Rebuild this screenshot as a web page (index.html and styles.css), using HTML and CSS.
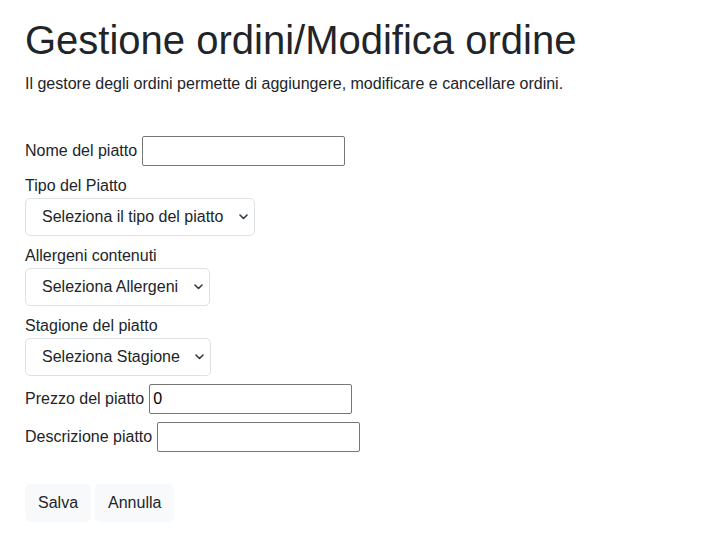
FILE: index.html
```html
<!DOCTYPE html>
<html lang="it">
<head>
<meta charset="utf-8">
<title>Gestione ordini</title>
<link rel="stylesheet" href="styles.css">
</head>
<body>
<main class="page">
  <h1 class="title">Gestione ordini/Modifica ordine</h1>
  <p class="lead">Il gestore degli ordini permette di aggiungere, modificare e cancellare ordini.</p>

  <form class="form">
    <div class="row inline">
      <label for="nome">Nome del piatto</label>
      <input id="nome" class="text-input" type="text">
    </div>

    <div class="group">
      <label for="tipo" class="block-label">Tipo del Piatto</label>
      <div class="select-wrap w-tipo">
        <select id="tipo" class="select"><option>Seleziona il tipo del piatto</option></select>
        <svg class="chev" width="9" height="6" viewBox="0 0 9 6"><path d="M1 1l3.5 3.5L8 1" fill="none" stroke="#343a40" stroke-width="1.6" stroke-linecap="round" stroke-linejoin="round"/></svg>
      </div>
    </div>

    <div class="group">
      <label for="allergeni" class="block-label">Allergeni contenuti</label>
      <div class="select-wrap w-allergeni">
        <select id="allergeni" class="select"><option>Seleziona Allergeni</option></select>
        <svg class="chev" width="9" height="6" viewBox="0 0 9 6"><path d="M1 1l3.5 3.5L8 1" fill="none" stroke="#343a40" stroke-width="1.6" stroke-linecap="round" stroke-linejoin="round"/></svg>
      </div>
    </div>

    <div class="group">
      <label for="stagione" class="block-label">Stagione del piatto</label>
      <div class="select-wrap w-stagione">
        <select id="stagione" class="select"><option>Seleziona Stagione</option></select>
        <svg class="chev" width="9" height="6" viewBox="0 0 9 6"><path d="M1 1l3.5 3.5L8 1" fill="none" stroke="#343a40" stroke-width="1.6" stroke-linecap="round" stroke-linejoin="round"/></svg>
      </div>
    </div>

    <div class="row inline">
      <label for="prezzo">Prezzo del piatto</label>
      <input id="prezzo" class="text-input" type="text" value="0">
    </div>

    <div class="row inline">
      <label for="descr">Descrizione piatto</label>
      <input id="descr" class="text-input" type="text">
    </div>

    <div class="actions">
      <button type="button" class="btn">Salva</button>
      <button type="button" class="btn">Annulla</button>
    </div>
  </form>
</main>
</body>
</html>
```

FILE: styles.css
```css
* { box-sizing: border-box; }

html, body {
  margin: 0;
  padding: 0;
  background: #fff;
}

body {
  font-family: "Liberation Sans", Arial, sans-serif;
  font-size: 16px;
  line-height: 1.5;
  color: #212529;
}

.page {
  padding: 16px 25px 0 25px;
}

.title {
  margin: 0 0 8px 0;
  font-size: 40px;
  line-height: 48px;
  font-weight: 400;
  color: #212529;
}

.lead {
  margin: 0 0 16px 0;
  font-size: 16px;
  line-height: 24px;
}

.form {
  margin-top: 40px;
  display: flex;
  flex-direction: column;
  align-items: flex-start;
}

.row {
  display: flex;
  align-items: center;
  gap: 5px;
  height: 30px;
  margin-bottom: 8px;
}

.row label {
  line-height: 24px;
}

.text-input {
  width: 203px;
  height: 30px;
  margin: 0;
  padding: 1px 3px;
  border: 1px solid #767676;
  border-radius: 2px;
  font-family: "Liberation Sans", Arial, sans-serif;
  font-size: 16px;
  color: #000;
  background: #fff;
  outline: none;
}

.group {
  display: flex;
  flex-direction: column;
  align-items: flex-start;
  margin-bottom: 8px;
}

.block-label {
  display: block;
  line-height: 24px;
}

.select-wrap {
  position: relative;
  height: 38px;
}

.w-tipo { width: 230px; }
.w-allergeni { width: 185px; }
.w-stagione { width: 186px; }

.select {
  -webkit-appearance: none;
  appearance: none;
  width: 100%;
  height: 38px;
  margin: 0;
  padding: 6px 30px 6px 16px;
  border: 1px solid #dee2e6;
  border-radius: 5px;
  background: #fff;
  font-family: "Liberation Sans", Arial, sans-serif;
  font-size: 16px;
  line-height: 24px;
  color: #212529;
  outline: none;
}

.chev {
  position: absolute;
  right: 7px;
  top: 16px;
  pointer-events: none;
}

.actions {
  display: flex;
  gap: 4px;
  margin-top: 24px;
}

.btn {
  height: 38px;
  padding: 6px 12px;
  border: 1px solid #f8f9fa;
  border-radius: 5px;
  background: #f8f9fa;
  font-family: "Liberation Sans", Arial, sans-serif;
  font-size: 16px;
  line-height: 24px;
  color: #212529;
}
```
